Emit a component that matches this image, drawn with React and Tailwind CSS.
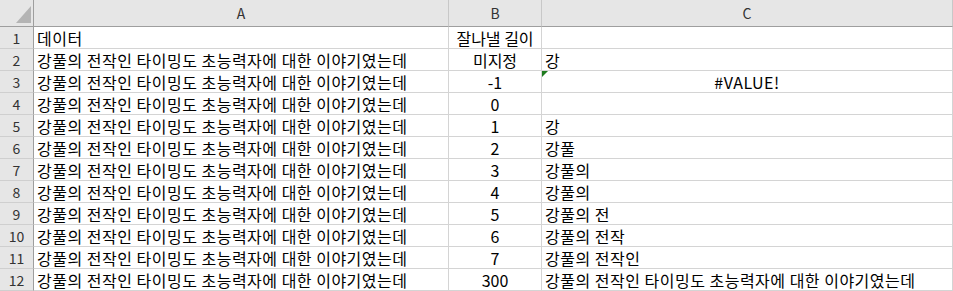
import React from "react";

const TEXT = "강풀의 전작인 타이밍도 초능력자에 대한 이야기였는데";
const rows = [
  { a: "데이터", b: "잘나낼 길이", c: "" },
  { a: TEXT, b: "미지정", c: "강" },
  { a: TEXT, b: "-1", c: "#VALUE!", err: true },
  { a: TEXT, b: "0", c: "" },
  { a: TEXT, b: "1", c: "강" },
  { a: TEXT, b: "2", c: "강풀" },
  { a: TEXT, b: "3", c: "강풀의" },
  { a: TEXT, b: "4", c: "강풀의" },
  { a: TEXT, b: "5", c: "강풀의 전" },
  { a: TEXT, b: "6", c: "강풀의 전작" },
  { a: TEXT, b: "7", c: "강풀의 전작인" },
  { a: TEXT, b: "300", c: TEXT },
];

const font = { fontFamily: '"Noto Sans CJK KR", "Malgun Gothic", sans-serif' };

export default function App() {
  return (
    <div className="w-[953px] h-[291px] bg-white overflow-hidden text-black" style={font}>
      <div className="grid grid-cols-[34px_415px_93px_411px] grid-rows-[27px_repeat(12,22px)]">
        <div className="relative bg-[#e6e6e6] border-r border-b border-[#9e9e9e]">
          <svg className="absolute left-[16px] top-[6px]" width="15" height="17" viewBox="0 0 15 17">
            <polygon points="15,0 15,17 0,17" fill="#b4b4b4" />
          </svg>
        </div>
        {["A", "B", "C"].map((l) => (
          <div
            key={l}
            className="bg-[#e6e6e6] border-b border-b-[#9e9e9e] border-r border-r-[#c8c8c8] flex items-center justify-center text-[14px] text-[#333]"
          >
            {l}
          </div>
        ))}
        {rows.map((r, i) => (
          <React.Fragment key={i}>
            <div className="bg-[#e6e6e6] border-r border-r-[#9e9e9e] border-b border-b-[#cfcfcf] flex items-center justify-center text-[14px] text-[#333] leading-none">
              {i + 1}
            </div>
            <div className="border-r border-b border-[#d4d4d4] flex items-center pl-[3px] text-[16px] tracking-[0.5px] leading-none whitespace-nowrap overflow-visible">
              {r.a}
            </div>
            <div className="border-r border-b border-[#d4d4d4] flex items-center justify-center text-[16px] leading-none whitespace-nowrap">
              {r.b}
            </div>
            <div
              className={`relative border-r border-b border-[#d4d4d4] flex items-center text-[16px] tracking-[0.5px] leading-none whitespace-nowrap ${
                r.err ? "justify-center" : "pl-[3px]"
              }`}
            >
              {r.err && (
                <svg className="absolute left-0 top-0" width="6" height="6" viewBox="0 0 6 6">
                  <polygon points="0,0 6,0 0,6" fill="#1e7b1e" />
                </svg>
              )}
              {r.c}
            </div>
          </React.Fragment>
        ))}
      </div>
    </div>
  );
}
